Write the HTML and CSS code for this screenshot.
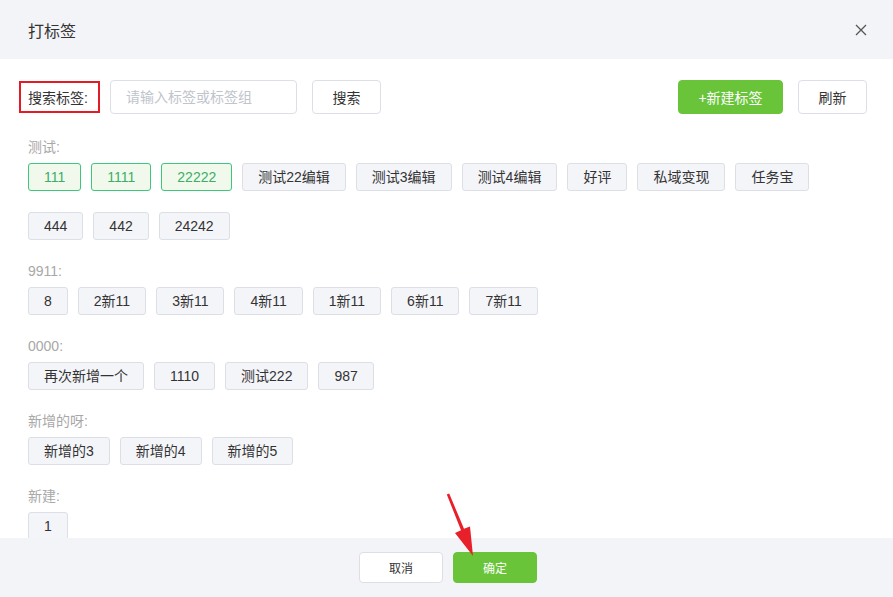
FILE: index.html
```html
<!DOCTYPE html>
<html lang="zh-CN">
<head>
    <meta charset="UTF-8">
    <title>打标签</title>
    <link rel="stylesheet" href="styles.css">
</head>
<body>
    <div class="dialog">
        <div class="dialog-header">
            <span class="dialog-title">打标签</span>
            <span class="close">
                <svg width="12" height="12" viewBox="0 0 12 12"><path d="M1 1L11 11M11 1L1 11" stroke="#555" stroke-width="1.3"/></svg>
            </span>
        </div>

        <div class="dialog-body">
            <!-- search row -->
            <div class="search-row">
                <div class="search-label">搜索标签:<span class="mark"></span></div>
                <input class="search-input" type="text" placeholder="请输入标签或标签组">
                <button class="btn">搜索</button>
                <div class="spacer"></div>
                <button class="btn btn-green btn-new">+新建标签</button>
                <button class="btn">刷新</button>
            </div>

            <div class="group">
                <div class="group-name">测试:</div>
                <div class="tags">
                    <span class="tag active">111</span>
                    <span class="tag active">1111</span>
                    <span class="tag active">22222</span>
                    <span class="tag">测试22编辑</span>
                    <span class="tag">测试3编辑</span>
                    <span class="tag">测试4编辑</span>
                    <span class="tag">好评</span>
                    <span class="tag">私域变现</span>
                    <span class="tag">任务宝</span>
                    <span class="tag">444</span>
                    <span class="tag">442</span>
                    <span class="tag">24242</span>
                </div>
            </div>

            <div class="group">
                <div class="group-name">9911:</div>
                <div class="tags">
                    <span class="tag">8</span>
                    <span class="tag">2新11</span>
                    <span class="tag">3新11</span>
                    <span class="tag">4新11</span>
                    <span class="tag">1新11</span>
                    <span class="tag">6新11</span>
                    <span class="tag">7新11</span>
                </div>
            </div>

            <div class="group">
                <div class="group-name">0000:</div>
                <div class="tags">
                    <span class="tag">再次新增一个</span>
                    <span class="tag">1110</span>
                    <span class="tag">测试222</span>
                    <span class="tag">987</span>
                </div>
            </div>

            <div class="group">
                <div class="group-name">新增的呀:</div>
                <div class="tags">
                    <span class="tag">新增的3</span>
                    <span class="tag">新增的4</span>
                    <span class="tag">新增的5</span>
                </div>
            </div>

            <div class="group">
                <div class="group-name">新建:</div>
                <div class="tags">
                    <span class="tag">1</span>
                </div>
            </div>
        </div>

        <div class="dialog-footer">
            <button class="btn btn-small">取消</button>
            <button class="btn btn-small btn-green">确定</button>
        </div>

        <!-- annotation arrow -->
        <svg class="arrow" width="45" height="72" viewBox="0 0 45 72">
            <polygon points="9.2,5.5 24,40.8 30,38.6 33,68 15,45 21,42.2 6.8,6.5" fill="#e8202a"/>
        </svg>
    </div>
</body>
</html>
```

FILE: styles.css
```css
* {
    box-sizing: border-box;
}

body {
    margin: 0;
    font-family: "Liberation Sans", "Noto Sans CJK SC", sans-serif;
    font-size: 14px;
    color: #333;
    background: #fff;
}

.dialog {
    position: relative;
    height: 100vh;
    display: flex;
    flex-direction: column;
}

.dialog-header {
    height: 59px;
    flex-shrink: 0;
    display: flex;
    align-items: center;
    justify-content: space-between;
    padding: 0 28px;
    background: #f3f4f8;
}

.dialog-title {
    font-size: 16px;
    color: #333;
}

.close {
    display: flex;
    margin-right: -2px;
}

.dialog-body {
    flex: 1;
    overflow: hidden;
    padding: 21px 26px 0 28px;
}

.search-row {
    display: flex;
    align-items: center;
    height: 34px;
}

.search-label {
    position: relative;
    width: 82px;
    flex-shrink: 0;
    color: #333;
}

.mark {
    position: absolute;
    left: -9px;
    top: -6px;
    width: 81px;
    height: 32px;
    border: 2px solid #e21b25;
}

.search-input {
    width: 187px;
    height: 34px;
    border: 1px solid #dcdfe6;
    border-radius: 4px;
    padding: 0 15px;
    font: inherit;
    color: #333;
    outline: none;
    margin-right: 15px;
}

.search-input::placeholder {
    color: #c0c4cc;
}

.spacer {
    flex: 1;
}

.btn {
    height: 34px;
    width: 69px;
    border: 1px solid #dcdfe6;
    border-radius: 4px;
    background: #fff;
    color: #333;
    font: inherit;
    padding: 0;
    cursor: pointer;
}

.btn-green {
    background: #69c43a;
    border-color: #69c43a;
    color: #fff;
}

.btn-new {
    width: 105px;
    margin-right: 15px;
}

.group {
    margin-top: 23px;
}

.group + .group {
    margin-top: 21px;
}

.group-name {
    line-height: 20px;
    color: #a8a8a8;
    margin-bottom: 6px;
}

.tags {
    display: flex;
    flex-wrap: wrap;
    column-gap: 10px;
    row-gap: 21px;
}

.tag {
    height: 28px;
    line-height: 26px;
    padding: 0 15px;
    background: #f4f5f9;
    border: 1px solid #dcdfe6;
    border-radius: 3px;
    color: #333;
    white-space: nowrap;
}

.tag.active {
    background: #f0f9ec;
    border-color: #3cc77b;
    color: #3cae68;
}

.dialog-footer {
    height: 59px;
    flex-shrink: 0;
    display: flex;
    align-items: center;
    justify-content: center;
    gap: 10px;
    background: #f3f4f8;
    padding-left: 3px;
}

.btn-small {
    width: 84px;
    height: 31px;
    font-size: 12px;
}

.arrow {
    position: absolute;
    left: 440px;
    top: 488px;
}
```
